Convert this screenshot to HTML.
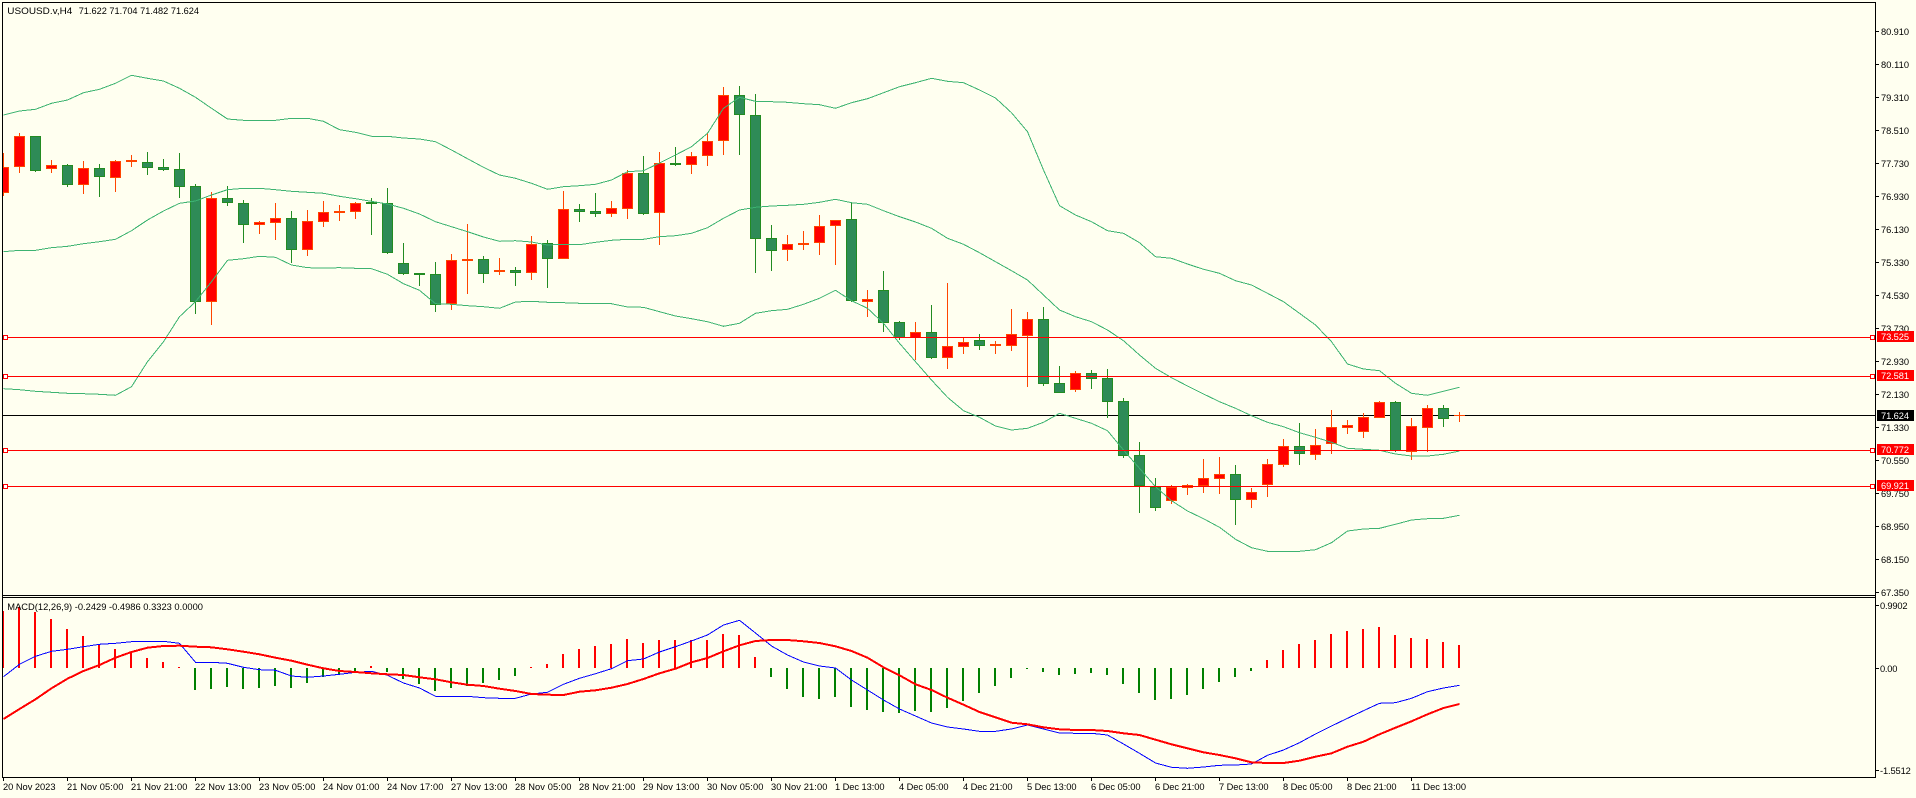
<!DOCTYPE html>
<html><head><meta charset="utf-8"><title>USOUSD.v,H4</title>
<style>html,body{margin:0;padding:0;background:#FFFFF0;overflow:hidden;width:1916px;height:798px}svg{display:block}text{font-family:"Liberation Sans",sans-serif;font-size:9.3px;fill:#000}.w{fill:#fff}.c{shape-rendering:crispEdges}</style></head>
<body>
<svg width="1916" height="798" viewBox="0 0 1916 798" xmlns="http://www.w3.org/2000/svg">
<rect width="1916" height="798" fill="#FFFFF0"/>
<!-- bid line -->
<path class="c" d="M3 415.5H1875" stroke="#000" fill="none"/>
<!-- wicks green -->
<path class="c" fill="none" stroke="#228B22" d="M35.5 136V172M67.5 164V187M99.5 164V197M147.5 152V175M163.5 159V171M179.5 153V198M195.5 184V314M227.5 186V206M243.5 200V243M291.5 211V263M371.5 198V235M387.5 188V254M403.5 243V275M419.5 273V286M435.5 262V312M483.5 256V283M515.5 267V286M547.5 240V288M579.5 204V222M595.5 193V217M643.5 156V215M675.5 147V166M739.5 86V155M755.5 94V273M771.5 225V271M851.5 203V302M883.5 271V332M899.5 321V340M931.5 305V359M979.5 334V350M1043.5 307V386M1059.5 366V393M1091.5 370V389M1107.5 369V418M1123.5 398V458M1139.5 442V513M1155.5 478V511M1235.5 465V525M1299.5 423V465M1395.5 401V452M1443.5 405V427"/>
<!-- wicks red -->
<path class="c" fill="none" stroke="#FF4500" d="M3.5 153V196M19.5 133V173M51.5 160V173M83.5 161V194M115.5 160V192M131.5 155V167M211.5 192V325M259.5 221V234M275.5 203V240M307.5 210V256M323.5 201V227M339.5 205V221M355.5 202V219M451.5 254V310M467.5 224V294M499.5 258V275M531.5 236V280M563.5 191V259M611.5 201V217M627.5 170V219M659.5 152V245M691.5 152V174M707.5 133V166M723.5 87V155M787.5 235V261M803.5 231V250M819.5 215V255M835.5 220V265M867.5 290V317M915.5 322V360M947.5 283V369M963.5 337V354M995.5 341V354M1011.5 309V351M1027.5 312V387M1075.5 371V392M1171.5 485V504M1187.5 484V495M1203.5 459V493M1219.5 457V494M1251.5 488V508M1267.5 459V497M1283.5 439V467M1315.5 429V460M1331.5 410V454M1347.5 420V434M1363.5 413V438M1379.5 401V418M1411.5 418V460M1427.5 405V452M1459.5 412V422M1454 415.5H1465"/>
<!-- bodies green -->
<path class="c" fill="#2E8B57" stroke="#228B22" d="M30.5 136.5h10v34h-10zM62.5 165.5h10v19h-10zM94.5 168.5h10v8h-10zM142.5 162.5h10v5h-10zM158.5 167.5h10v2h-10zM174.5 169.5h10v17h-10zM190.5 186.5h10v115h-10zM222.5 198.5h10v4h-10zM238.5 203.5h10v21h-10zM286.5 218.5h10v31h-10zM366.5 202.5h10v1h-10zM382.5 203.5h10v49h-10zM398.5 263.5h10v10h-10zM414.5 273.5h10v1h-10zM430.5 274.5h10v30h-10zM478.5 259.5h10v14h-10zM510.5 270.5h10v2h-10zM542.5 243.5h10v15h-10zM574.5 209.5h10v2h-10zM590.5 211.5h10v2h-10zM638.5 173.5h10v40h-10zM670.5 163.5h10v1h-10zM734.5 95.5h10v19h-10zM750.5 115.5h10v123h-10zM766.5 238.5h10v12h-10zM846.5 219.5h10v81h-10zM878.5 290.5h10v32h-10zM894.5 322.5h10v15h-10zM926.5 332.5h10v25h-10zM974.5 340.5h10v5h-10zM1038.5 319.5h10v64h-10zM1054.5 383.5h10v9h-10zM1086.5 373.5h10v5h-10zM1102.5 378.5h10v23h-10zM1118.5 401.5h10v54h-10zM1134.5 455.5h10v30h-10zM1150.5 487.5h10v20h-10zM1230.5 474.5h10v25h-10zM1294.5 446.5h10v7h-10zM1390.5 402.5h10v48h-10zM1438.5 408.5h10v10h-10z"/>
<!-- bodies red -->
<path class="c" fill="#FF0000" stroke="#FF4500" d="M-1.5 167.5h10v25h-10zM14.5 136.5h10v30h-10zM46.5 165.5h10v3h-10zM78.5 168.5h10v16h-10zM110.5 161.5h10v16h-10zM126.5 160.5h10v1h-10zM206.5 198.5h10v103h-10zM254.5 222.5h10v2h-10zM270.5 218.5h10v4h-10zM302.5 221.5h10v28h-10zM318.5 212.5h10v9h-10zM334.5 211.5h10v1h-10zM350.5 203.5h10v8h-10zM446.5 260.5h10v43h-10zM462.5 259.5h10v1h-10zM494.5 270.5h10v1h-10zM526.5 244.5h10v28h-10zM558.5 209.5h10v49h-10zM606.5 208.5h10v5h-10zM622.5 173.5h10v35h-10zM654.5 163.5h10v49h-10zM686.5 156.5h10v8h-10zM702.5 141.5h10v14h-10zM718.5 95.5h10v45h-10zM782.5 244.5h10v5h-10zM798.5 243.5h10v1h-10zM814.5 226.5h10v16h-10zM830.5 220.5h10v5h-10zM862.5 299.5h10v2h-10zM910.5 332.5h10v5h-10zM942.5 346.5h10v11h-10zM958.5 342.5h10v4h-10zM990.5 344.5h10v1h-10zM1006.5 334.5h10v11h-10zM1022.5 319.5h10v16h-10zM1070.5 373.5h10v16h-10zM1166.5 487.5h10v13h-10zM1182.5 485.5h10v2h-10zM1198.5 478.5h10v7h-10zM1214.5 474.5h10v4h-10zM1246.5 492.5h10v7h-10zM1262.5 464.5h10v20h-10zM1278.5 446.5h10v18h-10zM1310.5 445.5h10v9h-10zM1326.5 427.5h10v16h-10zM1342.5 425.5h10v2h-10zM1358.5 417.5h10v14h-10zM1374.5 402.5h10v15h-10zM1406.5 426.5h10v25h-10zM1422.5 408.5h10v19h-10z"/>
<!-- bollinger -->
<g class="c" fill="none" stroke="#3CB371">
<polyline points="3.5,115 19.5,111 35.5,109.3 51.5,103.3 67.5,100 83.5,92.7 99.5,89.3 115.5,83.3 131.5,75.3 147.5,78.3 163.5,81 179.5,88.3 195.5,97.3 211.5,108.3 227.5,119 243.5,120.3 259.5,120.3 275.5,120.3 291.5,118.3 307.5,118.3 323.5,121.3 339.5,129.7 355.5,132.3 371.5,136.3 387.5,136.3 403.5,138 419.5,139 435.5,141.7 451.5,150 467.5,158.7 483.5,167.3 499.5,175 515.5,178.3 531.5,183.3 547.5,189.3 563.5,186.7 579.5,185.7 595.5,184.3 611.5,180 627.5,171.7 643.5,170.7 659.5,163 675.5,155 691.5,146.7 707.5,133.3 723.5,108.3 739.5,97.3 755.5,101.3 771.5,101.7 787.5,102.3 803.5,103.7 819.5,104.7 835.5,108.3 851.5,102.7 867.5,98.7 883.5,92.7 899.5,86.7 915.5,82.7 931.5,78.3 947.5,81.3 963.5,82.7 979.5,90 995.5,98 1011.5,112.7 1027.5,131.7 1043.5,170 1059.5,205.7 1075.5,215 1091.5,221.7 1107.5,230.7 1123.5,233.3 1139.5,242.7 1155.5,256.7 1171.5,258.3 1187.5,264 1203.5,269.3 1219.5,273.3 1235.5,280.7 1251.5,285 1267.5,293.3 1283.5,301.7 1299.5,313.3 1315.5,325 1331.5,341.7 1347.5,364 1363.5,369 1379.5,370.7 1395.5,383.3 1411.5,393.3 1427.5,395.3 1443.5,391.3 1459.5,387.3"/>
<polyline points="3.5,251.7 19.5,250.3 35.5,250.3 51.5,247.7 67.5,246.3 83.5,243.7 99.5,241.7 115.5,239.3 131.5,230.7 147.5,220 163.5,211 179.5,203.3 195.5,201 211.5,195 227.5,189.7 243.5,188.3 259.5,188.3 275.5,189.7 291.5,191.3 307.5,192.3 323.5,193.3 339.5,196.3 355.5,198.7 371.5,201.3 387.5,204 403.5,208.3 419.5,214 435.5,221.7 451.5,226.7 467.5,231.7 483.5,237 499.5,241.3 515.5,240.7 531.5,242 547.5,245 563.5,244.3 579.5,244.7 595.5,242.3 611.5,240.3 627.5,239.3 643.5,239.3 659.5,236.7 675.5,235.7 691.5,233.3 707.5,227.7 723.5,218.3 739.5,210 755.5,207.3 771.5,206 787.5,205.3 803.5,204.3 819.5,202.3 835.5,199.3 851.5,202.7 867.5,204.3 883.5,210.7 899.5,216.7 915.5,222 931.5,228.3 947.5,238.3 963.5,244.3 979.5,252.7 995.5,261.7 1011.5,270.7 1027.5,280 1043.5,295 1059.5,310 1075.5,316.7 1091.5,321.7 1107.5,330 1123.5,340.7 1139.5,355 1155.5,368.3 1171.5,377.7 1187.5,386 1203.5,394 1219.5,401.7 1235.5,408.3 1251.5,415.7 1267.5,422.3 1283.5,426.7 1299.5,432.7 1315.5,437.3 1331.5,442.3 1347.5,448.3 1363.5,449.3 1379.5,450.3 1395.5,454 1411.5,456 1427.5,456 1443.5,454.3 1459.5,451"/>
<polyline points="3.5,388.7 19.5,389.7 35.5,391.3 51.5,392.3 67.5,393.3 83.5,393.7 99.5,394.3 115.5,395.3 131.5,386.7 147.5,361.7 163.5,341.7 179.5,316.7 195.5,301.7 211.5,281.7 227.5,260.3 243.5,258.7 259.5,256.3 275.5,257.3 291.5,265 307.5,267.7 323.5,268 339.5,267.7 355.5,268.3 371.5,268.7 387.5,274.3 403.5,283.7 419.5,290.3 435.5,303.7 451.5,304.3 467.5,305.7 483.5,306.7 499.5,308.3 515.5,302 531.5,301.3 547.5,302.3 563.5,302.7 579.5,303.3 595.5,303.7 611.5,303.7 627.5,307 643.5,307.3 659.5,311.7 675.5,316 691.5,318.7 707.5,321.7 723.5,326.3 739.5,323.3 755.5,313.3 771.5,310.7 787.5,309.3 803.5,304.3 819.5,298.3 835.5,290.3 851.5,300.7 867.5,308.3 883.5,323.3 899.5,343.3 915.5,361.7 931.5,380 947.5,397.3 963.5,410.7 979.5,417.3 995.5,426 1011.5,430 1027.5,428.3 1043.5,422.3 1059.5,413.3 1075.5,418.3 1091.5,423.3 1107.5,430.7 1123.5,450 1139.5,468.3 1155.5,486.7 1171.5,500.7 1187.5,511 1203.5,518.7 1219.5,527.3 1235.5,539.3 1251.5,547.7 1267.5,551.3 1283.5,551.3 1299.5,551.3 1315.5,549.7 1331.5,542.7 1347.5,531 1363.5,529 1379.5,528.3 1395.5,524.3 1411.5,520 1427.5,518.7 1443.5,518.3 1459.5,515.3"/>
</g>
<!-- horizontal lines -->
<path class="c" d="M3 337.5H1875M3 376.5H1875M3 450.5H1875M3 486.5H1875" stroke="#FF0000" fill="none"/>
<g class="c" fill="#fff" stroke="#FF0000">
<rect x="3.5" y="335.5" width="4" height="4"/><rect x="3.5" y="374.5" width="4" height="4"/><rect x="3.5" y="448.5" width="4" height="4"/><rect x="3.5" y="484.5" width="4" height="4"/>
<rect x="1870.5" y="335.5" width="4" height="4"/><rect x="1870.5" y="374.5" width="4" height="4"/><rect x="1870.5" y="448.5" width="4" height="4"/><rect x="1870.5" y="484.5" width="4" height="4"/>
</g>
<!-- MACD histogram -->
<path class="c" fill="none" stroke="#FF0000" stroke-width="2" d="M3 668V611M19 668V607M35 668V612M51 668V619M67 668V629M83 668V636M99 668V644M115 668V649M131 668V653M147 668V658M163 668V662M179 668V667M371 668V666M531 668V667M547 668V664M563 668V654M579 668V649M595 668V646M611 668V644M627 668V639M643 668V643M659 668V640M675 668V640M691 668V640M707 668V640M723 668V634M739 668V635M755 668V657M1267 668V660M1283 668V650M1299 668V644M1315 668V640M1331 668V634M1347 668V631M1363 668V629M1379 668V627M1395 668V635M1411 668V638M1427 668V639M1443 668V642M1459 668V645"/>
<path class="c" fill="none" stroke="#008000" stroke-width="2" d="M195 668V690M211 668V689M227 668V687M243 668V689M259 668V688M275 668V686M291 668V688M307 668V683M323 668V677M339 668V674M355 668V671M387 668V672M403 668V679M419 668V684M435 668V691M451 668V688M467 668V686M483 668V683M499 668V680M515 668V676M771 668V677M787 668V689M803 668V697M819 668V699M835 668V697M851 668V707M867 668V710M883 668V712M899 668V713M915 668V711M931 668V712M947 668V708M963 668V701M979 668V693M995 668V686M1011 668V678M1027 668V669M1043 668V672M1059 668V675M1075 668V674M1091 668V673M1107 668V675M1123 668V684M1139 668V693M1155 668V700M1171 668V699M1187 668V695M1203 668V689M1219 668V682M1235 668V677M1251 668V671"/>
<!-- MACD lines -->
<polyline class="c" fill="none" stroke="#0000FF" points="3.5,676.7 19.5,664.3 35.5,656.3 51.5,651.3 67.5,649.3 83.5,646.7 99.5,644.3 115.5,643.3 131.5,641.7 147.5,641.3 163.5,641.3 179.5,643.3 195.5,662.3 211.5,662.3 227.5,663.3 243.5,667.3 259.5,669.7 275.5,670.3 291.5,676 307.5,677.3 323.5,676 339.5,674.3 355.5,672.3 371.5,671.3 387.5,675.3 403.5,683 419.5,688 435.5,696.3 451.5,696.3 467.5,696.3 483.5,697.7 499.5,698.3 515.5,698.3 531.5,694 547.5,692.3 563.5,684.3 579.5,678.3 595.5,673.7 611.5,668.7 627.5,660.7 643.5,659 659.5,652 675.5,646.7 691.5,641 707.5,635 723.5,625 739.5,620.3 755.5,633 771.5,646 787.5,655 803.5,662 819.5,666 835.5,668 851.5,680 867.5,690 883.5,700 899.5,709 915.5,716 931.5,723 947.5,727 963.5,729 979.5,731.3 995.5,731.3 1011.5,729 1027.5,725 1043.5,729 1059.5,733 1075.5,733.3 1091.5,733.3 1107.5,735 1123.5,744 1139.5,753.3 1155.5,763 1171.5,767.3 1187.5,768.3 1203.5,767 1219.5,765.3 1235.5,765 1251.5,764 1267.5,755.3 1283.5,750 1299.5,742.7 1315.5,734 1331.5,726 1347.5,718.3 1363.5,710.7 1379.5,703.3 1395.5,702.7 1411.5,698.3 1427.5,691.7 1443.5,688 1459.5,685.3"/>
<polyline class="c" fill="none" stroke="#FF0000" stroke-width="2" points="3.5,719 19.5,709 35.5,699.3 51.5,688.3 67.5,678.7 83.5,671 99.5,665 115.5,657.7 131.5,652 147.5,647.7 163.5,646 179.5,645.7 195.5,646.7 211.5,647.3 227.5,649.3 243.5,651.7 259.5,654.3 275.5,657.7 291.5,660.7 307.5,664.7 323.5,668.3 339.5,671 355.5,672 371.5,673.3 387.5,674.3 403.5,675 419.5,677.3 435.5,679.3 451.5,682.3 467.5,684.7 483.5,686 499.5,688.7 515.5,691 531.5,694 547.5,694.7 563.5,695 579.5,691.7 595.5,690.3 611.5,687.7 627.5,684 643.5,679 659.5,673.3 675.5,668.7 691.5,662.3 707.5,658 723.5,651.3 739.5,645.3 755.5,641 771.5,640 787.5,640 803.5,641.3 819.5,643 835.5,646.3 851.5,651 867.5,657.7 883.5,667.3 899.5,675.3 915.5,684.3 931.5,690 947.5,697.7 963.5,704.7 979.5,712 995.5,717.3 1011.5,722.7 1027.5,724.3 1043.5,727.3 1059.5,729.3 1075.5,730 1091.5,730 1107.5,731 1123.5,733.3 1139.5,735 1155.5,739.7 1171.5,744.3 1187.5,748.3 1203.5,752.3 1219.5,755 1235.5,758.3 1251.5,762.3 1267.5,763 1283.5,763 1299.5,760.7 1315.5,756.7 1331.5,753.3 1347.5,746.7 1363.5,741.7 1379.5,734.3 1395.5,727.7 1411.5,721.3 1427.5,714.3 1443.5,708 1459.5,704"/>
<!-- frame -->
<rect x="0" y="0" width="2" height="798" fill="#FFFFF0"/>
<path class="c" fill="none" stroke="#000" d="M2.5 2V778M2 2.5H1876M1875.5 2V778M2 595.5H1876M2 597.5H1876M2 777.5H1876"/>
<!-- axis ticks -->
<path class="c" fill="none" stroke="#000" d="M1875 31.5h4M1875 64.5h4M1875 97.5h4M1875 130.5h4M1875 163.5h4M1875 196.5h4M1875 229.5h4M1875 262.5h4M1875 295.5h4M1875 328.5h4M1875 361.5h4M1875 394.5h4M1875 427.5h4M1875 460.5h4M1875 493.5h4M1875 526.5h4M1875 559.5h4M1875 592.5h4M1875 605.5h4M1875 668.5h4M1875 770.5h4M3.5 777V781M67.5 777V781M131.5 777V781M195.5 777V781M259.5 777V781M323.5 777V781M387.5 777V781M451.5 777V781M515.5 777V781M579.5 777V781M643.5 777V781M707.5 777V781M771.5 777V781M835.5 777V781M899.5 777V781M963.5 777V781M1027.5 777V781M1091.5 777V781M1155.5 777V781M1219.5 777V781M1283.5 777V781M1347.5 777V781M1411.5 777V781"/>
<!-- headers -->
<text x="7.3" y="14" textLength="65" lengthAdjust="spacingAndGlyphs">USOUSD.v,H4</text>
<text x="78.7" y="14" textLength="120.3" lengthAdjust="spacingAndGlyphs">71.622 71.704 71.482 71.624</text>
<text x="7.3" y="610" textLength="195.7" lengthAdjust="spacingAndGlyphs">MACD(12,26,9) -0.2429 -0.4986 0.3323 0.0000</text>
<!-- price axis -->
<text x="1881" y="35" textLength="28">80.910</text>
<text x="1881" y="68" textLength="28">80.110</text>
<text x="1881" y="101" textLength="28">79.310</text>
<text x="1881" y="134" textLength="28">78.510</text>
<text x="1881" y="167" textLength="28">77.730</text>
<text x="1881" y="200" textLength="28">76.930</text>
<text x="1881" y="233" textLength="28">76.130</text>
<text x="1881" y="266" textLength="28">75.330</text>
<text x="1881" y="299" textLength="28">74.530</text>
<text x="1881" y="332" textLength="28">73.730</text>
<text x="1881" y="365" textLength="28">72.930</text>
<text x="1881" y="398" textLength="28">72.130</text>
<text x="1881" y="431" textLength="28">71.330</text>
<text x="1881" y="464" textLength="28">70.550</text>
<text x="1881" y="497" textLength="28">69.750</text>
<text x="1881" y="530" textLength="28">68.950</text>
<text x="1881" y="563" textLength="28">68.150</text>
<text x="1881" y="596" textLength="28">67.350</text>
<rect x="1877" y="598" width="39" height="2" fill="#FFFFF0"/>
<text x="1880" y="609" textLength="27.6">0.9902</text>
<text x="1880" y="672" textLength="17.4">0.00</text>
<text x="1880" y="774" textLength="30.8">-1.5512</text>
<!-- price tags -->
<rect x="1877" y="331" width="37" height="11" fill="#FF0000"/><text class="w" x="1881" y="340" textLength="28">73.525</text>
<rect x="1877" y="370" width="37" height="11" fill="#FF0000"/><text class="w" x="1881" y="379" textLength="28">72.581</text>
<rect x="1877" y="410" width="37" height="11" fill="#000"/><text class="w" x="1881" y="419" textLength="28">71.624</text>
<rect x="1877" y="444" width="37" height="11" fill="#FF0000"/><text class="w" x="1881" y="453" textLength="28">70.772</text>
<rect x="1877" y="480" width="37" height="11" fill="#FF0000"/><text class="w" x="1881" y="489" textLength="28">69.921</text>
<!-- time axis -->
<text x="3" y="790" textLength="52.5">20 Nov 2023</text>
<text x="67" y="790" textLength="56.4">21 Nov 05:00</text>
<text x="131" y="790" textLength="56.4">21 Nov 21:00</text>
<text x="195" y="790" textLength="56.4">22 Nov 13:00</text>
<text x="259" y="790" textLength="56.4">23 Nov 05:00</text>
<text x="323" y="790" textLength="56.4">24 Nov 01:00</text>
<text x="387" y="790" textLength="56.4">24 Nov 17:00</text>
<text x="451" y="790" textLength="56.4">27 Nov 13:00</text>
<text x="515" y="790" textLength="56.4">28 Nov 05:00</text>
<text x="579" y="790" textLength="56.4">28 Nov 21:00</text>
<text x="643" y="790" textLength="56.4">29 Nov 13:00</text>
<text x="707" y="790" textLength="56.4">30 Nov 05:00</text>
<text x="771" y="790" textLength="56.4">30 Nov 21:00</text>
<text x="835" y="790" textLength="49.5">1 Dec 13:00</text>
<text x="899" y="790" textLength="49.5">4 Dec 05:00</text>
<text x="963" y="790" textLength="49.5">4 Dec 21:00</text>
<text x="1027" y="790" textLength="49.5">5 Dec 13:00</text>
<text x="1091" y="790" textLength="49.5">6 Dec 05:00</text>
<text x="1155" y="790" textLength="49.5">6 Dec 21:00</text>
<text x="1219" y="790" textLength="49.5">7 Dec 13:00</text>
<text x="1283" y="790" textLength="49.5">8 Dec 05:00</text>
<text x="1347" y="790" textLength="49.5">8 Dec 21:00</text>
<text x="1411" y="790" textLength="55">11 Dec 13:00</text>
</svg>
</body></html>
